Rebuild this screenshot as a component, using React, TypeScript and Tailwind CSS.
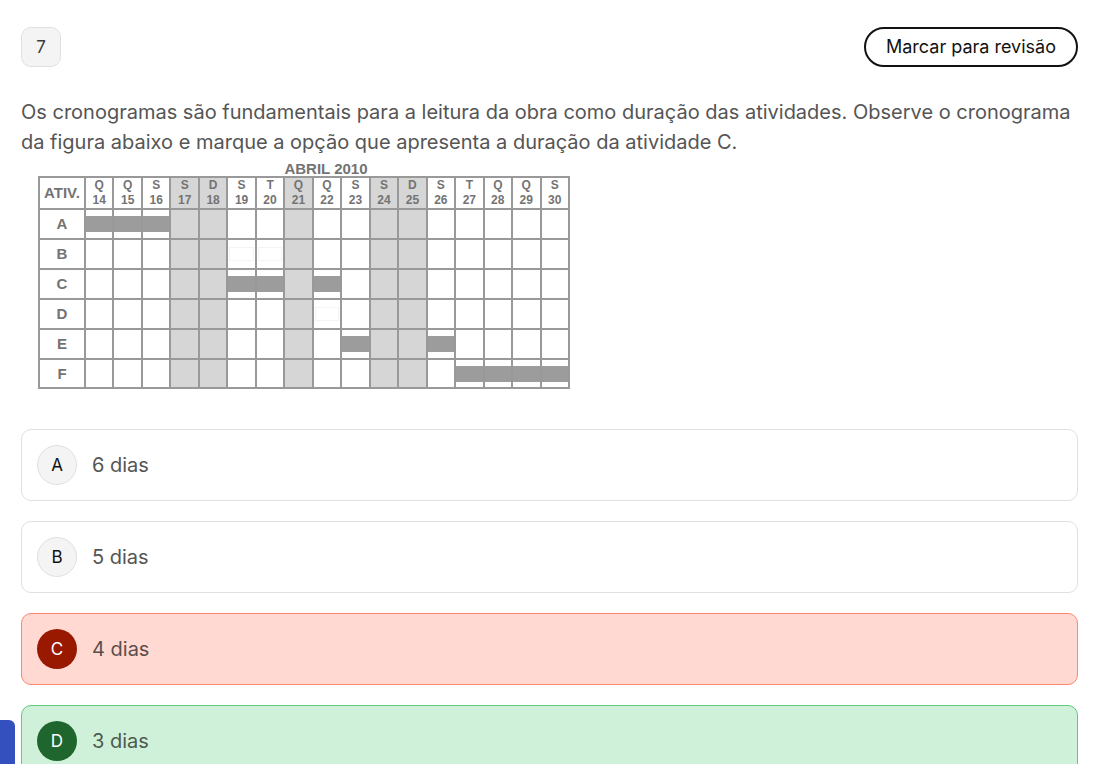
type Day = { weekday: string; date: number; off?: boolean };
type Task = { name: string; days: number[]; faint?: number[] };
type Status = "idle" | "wrong" | "correct";

const DAYS: Day[] = [
  { weekday: "Q", date: 14 },
  { weekday: "Q", date: 15 },
  { weekday: "S", date: 16 },
  { weekday: "S", date: 17, off: true },
  { weekday: "D", date: 18, off: true },
  { weekday: "S", date: 19 },
  { weekday: "T", date: 20 },
  { weekday: "Q", date: 21, off: true },
  { weekday: "Q", date: 22 },
  { weekday: "S", date: 23 },
  { weekday: "S", date: 24, off: true },
  { weekday: "D", date: 25, off: true },
  { weekday: "S", date: 26 },
  { weekday: "T", date: 27 },
  { weekday: "Q", date: 28 },
  { weekday: "Q", date: 29 },
  { weekday: "S", date: 30 },
];

const TASKS: Task[] = [
  { name: "A", days: [14, 15, 16] },
  { name: "B", days: [], faint: [19, 20] },
  { name: "C", days: [19, 20, 22] },
  { name: "D", days: [], faint: [22] },
  { name: "E", days: [23, 26] },
  { name: "F", days: [27, 28, 29, 30] },
];

const OPTIONS: { letter: string; text: string; status: Status }[] = [
  { letter: "A", text: "6 dias", status: "idle" },
  { letter: "B", text: "5 dias", status: "idle" },
  { letter: "C", text: "4 dias", status: "wrong" },
  { letter: "D", text: "3 dias", status: "correct" },
];

const CARD: Record<Status, string> = {
  idle: "border-[#e0e0e0] bg-white text-[#555555]",
  wrong: "border-[#ff8672] bg-[#ffd9d2] text-[#5a4f4d]",
  correct: "border-[#5fcb7b] bg-[#d0f1d9] text-[#4c5a50]",
};

const BADGE: Record<Status, string> = {
  idle: "border border-[#e0e0e0] bg-[#f4f4f4] text-[#121212]",
  wrong: "bg-[#991900] text-white",
  correct: "bg-[#1f662e] text-white",
};

function Schedule() {
  return (
    <table className="ml-[17px] w-[532px] table-fixed border-collapse border-2 border-[#999999] font-['Liberation_Sans',Arial,sans-serif] font-bold text-[#737373]">
      <caption className="pl-11 text-center text-[15px] leading-[15px]">ABRIL 2010</caption>
      <colgroup>
        <col className="w-[46px]" />
        {DAYS.map((day) => (
          <col key={day.date} />
        ))}
      </colgroup>
      <thead>
        <tr className="h-8">
          <th scope="col" className="border-2 border-[#999999] p-0 text-[15px] leading-4">
            ATIV.
          </th>
          {DAYS.map((day) => (
            <th
              key={day.date}
              scope="col"
              className={`border-2 border-[#999999] p-0 text-xs leading-[15px] ${day.off ? "bg-[#d6d6d6]" : ""}`}
            >
              {day.weekday}
              <br />
              {day.date}
            </th>
          ))}
        </tr>
      </thead>
      <tbody>
        {TASKS.map((task) => (
          <tr key={task.name} className="h-[30px] last:h-[29px]">
            <th scope="row" className="border-2 border-[#999999] p-0 text-[15px] leading-4">
              {task.name}
            </th>
            {DAYS.map((day) => (
              <td
                key={day.date}
                className={`border-2 border-[#999999] p-0 ${day.off ? "bg-[#d6d6d6]" : ""}`}
              >
                {task.days.includes(day.date) && <div className="h-4 bg-[#9c9c9c]" />}
                {task.faint?.includes(day.date) && (
                  <div className="mx-px h-3.5 border border-[#f4f4f4]" />
                )}
              </td>
            ))}
          </tr>
        ))}
      </tbody>
    </table>
  );
}

export default function App() {
  return (
    <main className="bg-white pt-[27px] pr-[18px] pb-5 pl-[21px] font-['Inter',sans-serif]">
      <header className="flex items-center justify-between">
        <span className="flex size-10 items-center justify-center rounded-[10px] border border-[#e0e0e0] bg-[#f4f4f4] pt-px text-[17px] text-[#3d3d3d]">
          7
        </span>
        <button
          type="button"
          className="h-10 rounded-full border-2 border-[#121212] bg-white px-5 text-lg text-[#121212]"
        >
          Marcar para revisão
        </button>
      </header>

      <p className="mt-[30px] text-xl leading-[30px] text-[#555555]">
        Os cronogramas são fundamentais para a leitura da obra como duração das atividades. Observe o
        cronograma da figura abaixo e marque a opção que apresenta a duração da atividade C.
      </p>

      <div className="mt-1">
        <Schedule />
      </div>

      <div className="mt-10 flex flex-col gap-5">
        {OPTIONS.map((option) => (
          <button
            key={option.letter}
            type="button"
            className={`flex h-[72px] w-full items-center gap-[15px] rounded-[10px] border px-[15px] text-left text-xl ${CARD[option.status]}`}
          >
            <span
              className={`flex size-10 shrink-0 items-center justify-center rounded-full pt-px text-[17px] ${BADGE[option.status]}`}
            >
              {option.letter}
            </span>
            {option.text}
          </button>
        ))}
      </div>

      <div className="fixed bottom-0 left-0 h-11 w-[15px] rounded-tr-md bg-[#3350be]" />
    </main>
  );
}
